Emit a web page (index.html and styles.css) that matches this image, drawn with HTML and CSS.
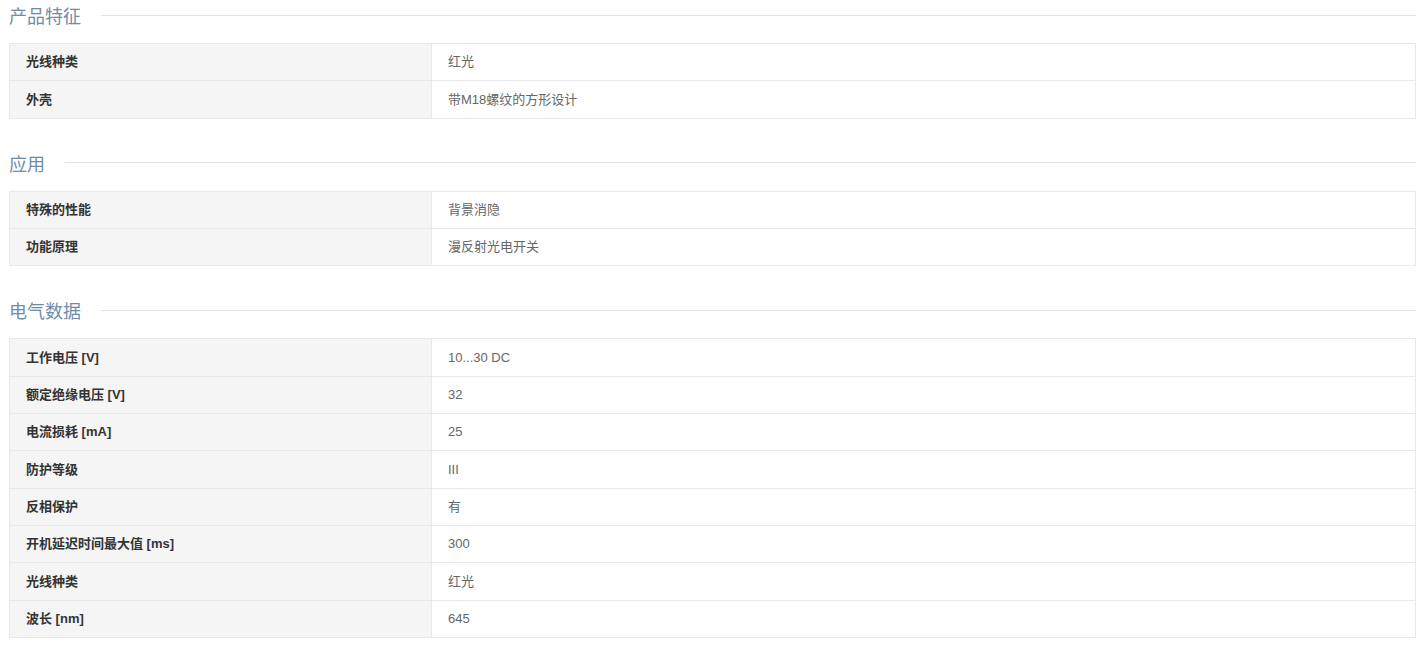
FILE: index.html
```html
<!DOCTYPE html>
<html lang="zh">
<head>
<meta charset="utf-8">
<link rel="stylesheet" href="styles.css">
</head>
<body>
<div class="page">
  <section class="sec">
    <h2 class="sec-title"><span>产品特征</span></h2>
    <table class="spec">
      <tr><th>光线种类</th><td>红光</td></tr>
      <tr><th>外壳</th><td>带M18螺纹的方形设计</td></tr>
    </table>
  </section>
  <section class="sec">
    <h2 class="sec-title"><span>应用</span></h2>
    <table class="spec">
      <tr><th>特殊的性能</th><td>背景消隐</td></tr>
      <tr><th>功能原理</th><td>漫反射光电开关</td></tr>
    </table>
  </section>
  <section class="sec">
    <h2 class="sec-title"><span>电气数据</span></h2>
    <table class="spec">
      <tr><th>工作电压 [V]</th><td>10...30 DC</td></tr>
      <tr><th>额定绝缘电压 [V]</th><td>32</td></tr>
      <tr><th>电流损耗 [mA]</th><td>25</td></tr>
      <tr><th>防护等级</th><td>III</td></tr>
      <tr><th>反相保护</th><td>有</td></tr>
      <tr><th>开机延迟时间最大值 [ms]</th><td>300</td></tr>
      <tr><th>光线种类</th><td>红光</td></tr>
      <tr><th>波长 [nm]</th><td>645</td></tr>
    </table>
  </section>
</div>
</body>
</html>
```
FILE: styles.css
```css
html, body {
  margin: 0;
  padding: 0;
  background: #fff;
}
body {
  font-family: "Liberation Sans", Arial, "Noto Sans CJK SC", sans-serif;
}
.page {
  padding: 0 10px 0 9px;
}
.sec {
  margin-bottom: 29px;
}
.sec-title {
  display: flex;
  align-items: center;
  height: 30px;
  margin: 0 0 13px 0;
  font-size: 18px;
  font-weight: normal;
  color: #6f8ca6;
  font-family: "Noto Sans CJK SC", sans-serif;
}
.sec-title::after {
  content: "";
  flex: 1;
  height: 1px;
  background: #e3e3e3;
  margin-left: 20px;
}
.spec {
  width: 100%;
  border-collapse: collapse;
  table-layout: fixed;
  font-size: 13px;
}
.spec th, .spec td {
  border: 1px solid #e8e8e8;
  height: 37.35px;
  padding: 0 16px;
  box-sizing: border-box;
  text-align: left;
  vertical-align: middle;
  line-height: 16px;
}
.spec th {
  width: 422px;
  background: #f5f5f5;
  color: #333;
  font-weight: bold;
}
.spec td {
  color: #666;
  font-weight: normal;
}
```
